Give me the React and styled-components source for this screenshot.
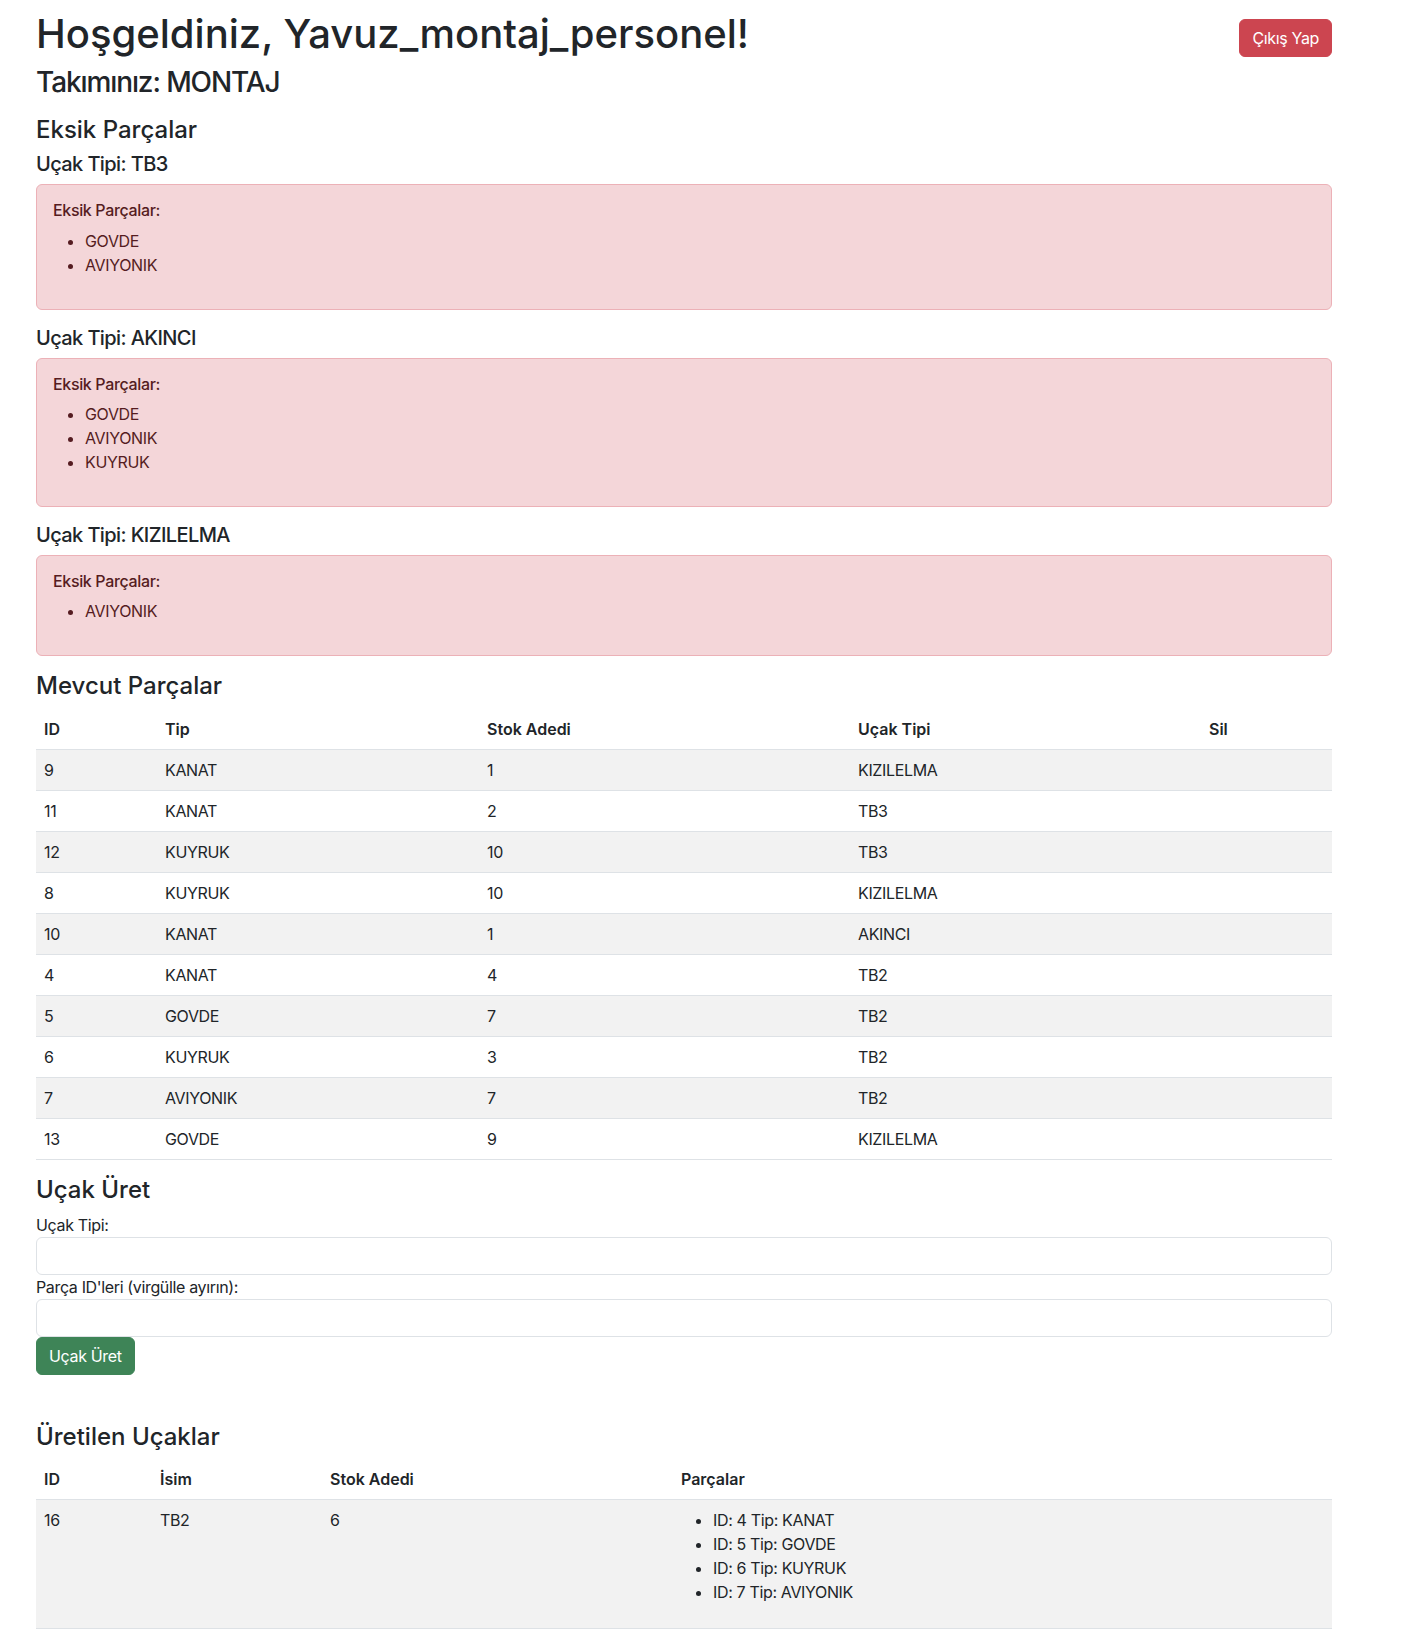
import React from 'react';
import styled, { createGlobalStyle } from 'styled-components';

const GlobalStyle = createGlobalStyle`
  body {
    margin: 0;
    background: #fff;
    color: #212529;
    font-family: Inter, "Liberation Sans", sans-serif;
    font-size: 16px;
    line-height: 1.5;
    letter-spacing: -0.35px;
  }
  * { box-sizing: border-box; }
`;

const missing = [
  { plane: 'TB3', parts: ['GOVDE', 'AVIYONIK'] },
  { plane: 'AKINCI', parts: ['GOVDE', 'AVIYONIK', 'KUYRUK'] },
  { plane: 'KIZILELMA', parts: ['AVIYONIK'] },
];

const stock = [
  [9, 'KANAT', 1, 'KIZILELMA'],
  [11, 'KANAT', 2, 'TB3'],
  [12, 'KUYRUK', 10, 'TB3'],
  [8, 'KUYRUK', 10, 'KIZILELMA'],
  [10, 'KANAT', 1, 'AKINCI'],
  [4, 'KANAT', 4, 'TB2'],
  [5, 'GOVDE', 7, 'TB2'],
  [6, 'KUYRUK', 3, 'TB2'],
  [7, 'AVIYONIK', 7, 'TB2'],
  [13, 'GOVDE', 9, 'KIZILELMA'],
];

const planes = [
  {
    id: 16,
    name: 'TB2',
    count: 6,
    parts: [
      [4, 'KANAT'],
      [5, 'GOVDE'],
      [6, 'KUYRUK'],
      [7, 'AVIYONIK'],
    ],
  },
];

export default function App() {
  return (
    <Page>
      <GlobalStyle />
      <Header>
        <Title>Hoşgeldiniz, Yavuz_montaj_personel!</Title>
        <Button tone="danger">Çıkış Yap</Button>
      </Header>
      <Team>Takımınız: MONTAJ</Team>

      <SectionTitle>Eksik Parçalar</SectionTitle>
      {missing.map(m => (
        <div key={m.plane}>
          <PlaneTitle>Uçak Tipi: {m.plane}</PlaneTitle>
          <Alert>
            <AlertHeading>Eksik Parçalar:</AlertHeading>
            <List>
              {m.parts.map(p => <li key={p}>{p}</li>)}
            </List>
          </Alert>
        </div>
      ))}

      <SectionTitle>Mevcut Parçalar</SectionTitle>
      <Table>
        <colgroup>
          <Col w={121} />
          <Col w={322} />
          <Col w={371} />
          <Col w={351} />
          <Col w={131} />
        </colgroup>
        <thead>
          <tr>
            <Th>ID</Th>
            <Th>Tip</Th>
            <Th>Stok Adedi</Th>
            <Th>Uçak Tipi</Th>
            <Th>Sil</Th>
          </tr>
        </thead>
        <tbody>
          {stock.map(([id, type, count, plane]) => (
            <tr key={id}>
              <Td>{id}</Td>
              <Td>{type}</Td>
              <Td>{count}</Td>
              <Td>{plane}</Td>
              <Td />
            </tr>
          ))}
        </tbody>
      </Table>

      <SectionTitle>Uçak Üret</SectionTitle>
      <Form>
        <Label>Uçak Tipi:</Label>
        <Input type="text" />
        <Label>Parça ID'leri (virgülle ayırın):</Label>
        <Input type="text" />
        <Button tone="success" type="button">Uçak Üret</Button>
      </Form>

      <SectionTitle spaced>Üretilen Uçaklar</SectionTitle>
      <Table>
        <colgroup>
          <Col w={116} />
          <Col w={170} />
          <Col w={351} />
          <Col w={659} />
        </colgroup>
        <thead>
          <tr>
            <Th>ID</Th>
            <Th>İsim</Th>
            <Th>Stok Adedi</Th>
            <Th>Parçalar</Th>
          </tr>
        </thead>
        <tbody>
          {planes.map(p => (
            <tr key={p.id}>
              <Td>{p.id}</Td>
              <Td>{p.name}</Td>
              <Td>{p.count}</Td>
              <Td>
                <List>
                  {p.parts.map(([id, type]) => (
                    <li key={id}>ID: {id} Tip: {type}</li>
                  ))}
                </List>
              </Td>
            </tr>
          ))}
        </tbody>
      </Table>
    </Page>
  );
}

const Page = styled.div`
  width: 1296px;
  margin-left: 36px;
  padding-top: 10px;
`;

const Header = styled.div`
  display: flex;
  justify-content: space-between;
  align-items: center;
`;

const Title = styled.h1`
  margin: 0 0 8px;
  font-size: 40px;
  font-weight: 500;
  line-height: 1.2;
  letter-spacing: 0;
`;

const Team = styled.h3`
  margin: 0 0 16px;
  font-size: 28px;
  font-weight: 500;
  line-height: 1.2;
  letter-spacing: -1.1px;
`;

const SectionTitle = styled.h4`
  margin: ${p => (p.spaced ? '48px' : '0')} 0 8px;
  font-size: 24px;
  font-weight: 500;
  line-height: 1.2;
  letter-spacing: 0;
`;

const PlaneTitle = styled.h5`
  margin: 0 0 8px;
  font-size: 20px;
  font-weight: 500;
  line-height: 1.2;
  letter-spacing: -0.6px;
`;

const Alert = styled.div`
  margin-bottom: 16px;
  padding: 16px;
  border: 1px solid #ecb1b7;
  border-radius: 6px;
  background: #f4d6d9;
  color: #551c21;
`;

const AlertHeading = styled.h6`
  margin: 0 0 8px;
  font-size: 16px;
  font-weight: 500;
  line-height: 1.2;
`;

const List = styled.ul`
  margin: 0 0 16px;
  padding-left: 32px;
`;

const Table = styled.table`
  width: 100%;
  margin-bottom: 16px;
  border-collapse: collapse;
  table-layout: fixed;
  vertical-align: top;

  tbody tr:nth-of-type(odd) td {
    background: #f2f2f2;
  }
`;

const Col = styled.col`
  width: ${p => p.w}px;
`;

const Th = styled.th`
  padding: 8px;
  border-bottom: 1px solid #dee2e6;
  font-weight: 600;
  text-align: left;
  letter-spacing: 0;
`;

const Td = styled.td`
  padding: 8px;
  border-bottom: 1px solid #dee2e6;
  vertical-align: top;
`;

const Form = styled.form`
  margin: 0;
`;

const Label = styled.label`
  display: block;
  line-height: 24px;
`;

const Input = styled.input`
  display: block;
  width: 100%;
  height: 38px;
  padding: 6px 12px;
  border: 1px solid #dee2e6;
  border-radius: 6px;
  font: inherit;
  color: #212529;
  background: #fff;
  outline: none;
`;

const Button = styled.button`
  display: inline-block;
  padding: 6px 12px;
  border: 1px solid ${p => (p.tone === 'danger' ? '#cc4550' : '#3e8457')};
  border-radius: 6px;
  background: ${p => (p.tone === 'danger' ? '#cc4550' : '#3e8457')};
  color: #fff;
  font-family: inherit;
  font-size: 16px;
  line-height: 24px;
  letter-spacing: -0.35px;
  cursor: pointer;
`;
